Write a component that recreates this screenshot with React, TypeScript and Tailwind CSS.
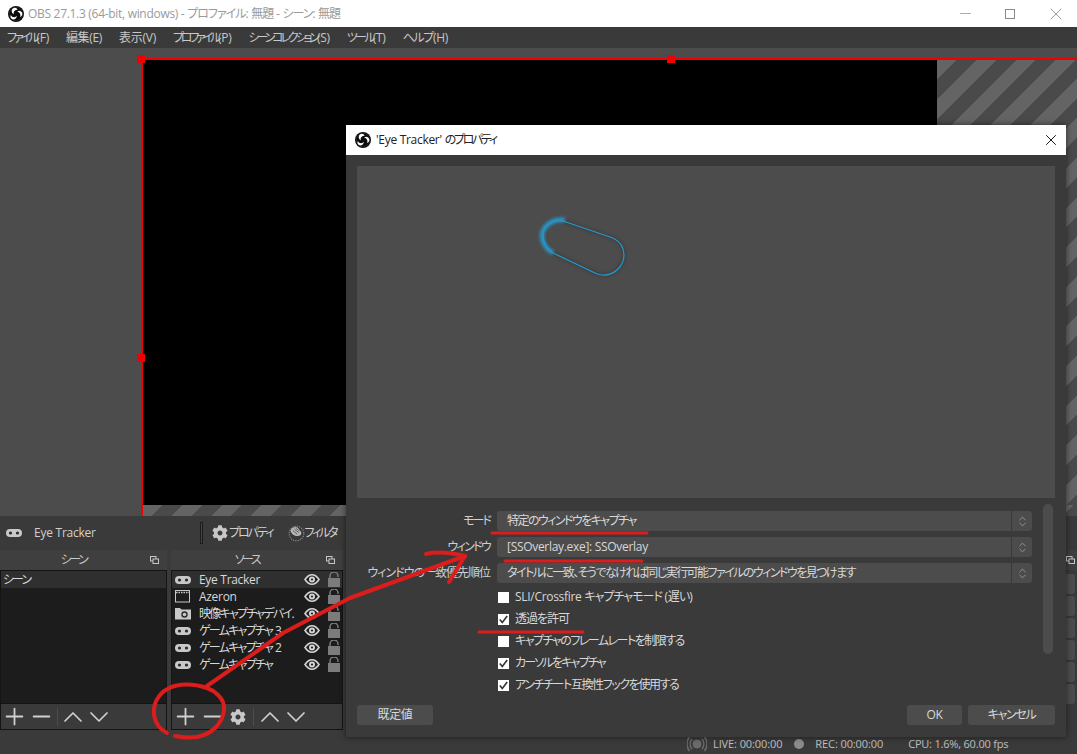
import { ChevronDown, ChevronUp, ChevronsUpDown, Minus, Plus, X } from "lucide-react";
import { FaCog } from "react-icons/fa";

const menus = [
  { label: "ファイル(F)", track: "tracking-[-3px]" },
  { label: "編集(E)", track: "tracking-[-0.4px]" },
  { label: "表示(V)", track: "tracking-[-0.2px]" },
  { label: "プロファイル(P)", track: "tracking-[-3.2px]" },
  { label: "シーンコレクション(S)", track: "tracking-[-3.1px]" },
  { label: "ツール(T)", track: "tracking-[-2.7px]" },
  { label: "ヘルプ(H)", track: "tracking-[-1.3px]" },
];

const sources = [
  { name: "Eye Tracker", icon: "game", active: true },
  { name: "Azeron", icon: "window" },
  { name: "映像キャプチャデバイ.", icon: "camera" },
  { name: "ゲームキャプチャ 3", icon: "game" },
  { name: "ゲームキャプチャ 2", icon: "game" },
  { name: "ゲームキャプチャ", icon: "game" },
];

const checks = [
  { label: "SLI/Crossfire キャプチャモード (遅い)", on: false, track: "tracking-[-1px]" },
  { label: "透過を許可", on: true, track: "tracking-[-1px]" },
  { label: "キャプチャのフレームレートを制限する", on: false, track: "tracking-[-1.5px]" },
  { label: "カーソルをキャプチャ", on: true, track: "tracking-[-1.8px]" },
  { label: "アンチチート互換性フックを使用する", on: true, track: "tracking-[-1.4px]" },
];

// 英数字と日本語で字間を分ける
const Jp = ({ text, track = "tracking-[-1px]" }: { text: string; track?: string }) => (
  <>
    {text.match(/[\x00-\x7f]+|[^\x00-\x7f]+/g)?.map((run, i) => (
      <span key={i} className={/^[\x00-\x7f]/.test(run) ? "tracking-[-0.3px]" : track}>
        {run}
      </span>
    ))}
  </>
);

const ObsLogo = ({ size = 16 }: { size?: number }) => (
  <svg width={size} height={size} viewBox="0 0 32 32" className="shrink-0">
    <circle cx="16" cy="16" r="16" fill="#0b0b0b" />
    <circle cx="16" cy="16" r="13.5" fill="none" stroke="#fff" strokeWidth="0.8" opacity="0.25" />
    <path d="M10 4.5a7 7 0 0 1 9.5 3 7.5 7.5 0 0 0-7.5 3.5 7 7 0 0 0-.3 5.5A7 7 0 0 1 10 4.5z" fill="#fff" />
    <path d="M28 13a7 7 0 0 1-4 9 7.5 7.5 0 0 0-.8-8.2 7 7 0 0 0-5-2.4A7 7 0 0 1 28 13z" fill="#fff" />
    <path d="M10 27a7 7 0 0 1-4.5-9 7.5 7.5 0 0 0 7 4.6 7 7 0 0 0 5-3A7 7 0 0 1 10 27z" fill="#fff" />
  </svg>
);

const GameIcon = () => (
  <svg width="16" height="8" viewBox="0 0 16 8" className="shrink-0">
    <rect width="16" height="8" rx="4" fill="#c8c8c8" />
    <circle cx="4.5" cy="4" r="1.6" fill="#2a2a2a" />
    <circle cx="11.5" cy="4" r="1.6" fill="#2a2a2a" />
  </svg>
);

const WindowIcon = () => (
  <svg width="16" height="13" viewBox="0 0 16 13" className="shrink-0">
    <rect x="0.5" y="0.5" width="14" height="11.5" fill="none" stroke="#c8c8c8" />
    <path d="M1 2.5h13" stroke="#c8c8c8" strokeWidth="1.5" strokeDasharray="1.5 1" />
  </svg>
);

const CameraIcon = () => (
  <svg width="16" height="13" viewBox="0 0 16 13" className="shrink-0">
    <path d="M0 1h5l1.5 1.5H16V12.5H0z" fill="#c8c8c8" />
    <circle cx="9.5" cy="7.5" r="3.2" fill="#2a2a2a" />
    <circle cx="9.5" cy="7.5" r="1.8" fill="#c8c8c8" />
  </svg>
);

const EyeIcon = () => (
  <svg width="16" height="11" viewBox="0 0 16 11" className="shrink-0">
    <path d="M0 5.5C2.5 1.5 5 0 8 0s5.5 1.5 8 5.5C13.5 9.5 11 11 8 11S2.5 9.5 0 5.5z" fill="#d4d4d4" />
    <path d="M2 5.5C4 2.7 6 1.5 8 1.5s4 1.2 6 4c-2 2.8-4 4-6 4s-4-1.2-6-4z" fill="#222" />
    <circle cx="8" cy="5.5" r="3" fill="#d4d4d4" />
    <circle cx="8" cy="5.5" r="1.1" fill="#222" />
  </svg>
);

const LockIcon = () => (
  <svg width="12" height="15" viewBox="0 0 12 15" className="shrink-0">
    <path d="M2 6V4a4 4 0 0 1 8 0v1" fill="none" stroke="#7c7c7c" strokeWidth="1.5" />
    <rect y="6" width="12" height="9" fill="#7c7c7c" />
  </svg>
);

const DockFloat = () => (
  <svg width="9" height="8" viewBox="0 0 9 8" className="shrink-0">
    <rect x="0.5" y="0.5" width="5.5" height="4.5" fill="none" stroke="#c8c8c8" />
    <rect x="3" y="3" width="5.5" height="4.5" fill="#3f3f3f" stroke="#c8c8c8" />
  </svg>
);

const FilterIcon = () => (
  <svg width="17" height="17" viewBox="0 0 22 22" className="shrink-0">
    <circle cx="11" cy="11" r="9.5" fill="none" stroke="#9a9a9a" strokeWidth="1.3" strokeDasharray="1.5 1.5" />
    <path d="M3 7c2-4 7-6 10-3l4 5c1 3-1 5-3 5-4 1-9-1-11-7z" fill="#b8b8b8" />
    <path d="M6 7l6 5M8 5l6 5M10 4l5 4" stroke="#3a3a3a" strokeWidth="0.9" />
  </svg>
);

const BroadcastIcon = () => (
  <svg width="20" height="16" viewBox="0 0 20 16" className="shrink-0" fill="none" stroke="#6b6b6b">
    <circle cx="10" cy="8" r="4" fill="#6b6b6b" />
    <path d="M5 3a8 8 0 0 0 0 10M15 3a8 8 0 0 1 0 10" strokeWidth="1.5" />
    <path d="M2.5 1a11 11 0 0 0 0 14M17.5 1a11 11 0 0 1 0 14" strokeWidth="1.5" />
  </svg>
);

const ToolbarIcons = ({ gear }: { gear?: boolean }) => (
  <div className="flex h-[27px] items-center overflow-hidden border border-[#141414] bg-[#3a3a3a] text-[#d0d0d0]">
    <Plus size={27} strokeWidth={1.6} className="shrink-0" />
    <Minus size={27} strokeWidth={1.6} className="shrink-0" />
    {gear && <FaCog size={16} className="ml-[4px] shrink-0 text-[#c8c8c8]" />}
    <div className={`h-[18px] w-px shrink-0 bg-[#4c4c4c] ${gear ? "ml-[7px]" : "ml-[2px]"}`} />
    <ChevronUp size={32} strokeWidth={1.3} className={gear ? "shrink-0" : "-ml-[1px] shrink-0"} />
    <ChevronDown size={32} strokeWidth={1.3} className="-ml-[6px] shrink-0" />
  </div>
);

const SourceIcon = ({ type }: { type: string }) => {
  if (type === "window") return <WindowIcon />;
  if (type === "camera") return <CameraIcon />;
  return <GameIcon />;
};

const DockTitle = ({ title }: { title: string }) => (
  <div className="relative flex h-[20px] shrink-0 items-center justify-center bg-[#3f3f3f] pr-[20px] text-[12px] text-[#c8c8c8]">
    <Jp text={title} track="tracking-[-2.5px]" />
    <span className="absolute right-[8px] top-[6px]">
      <DockFloat />
    </span>
  </div>
);

const SelectRow = ({ label, value, labelTrack }: { label: string; value: string; labelTrack: string }) => (
  <div className="flex h-[20px] items-center">
    <div className="w-[146px] shrink-0 whitespace-nowrap pr-[7px] text-right text-[12px] text-[#d0d0d0]">
      <Jp text={label} track={labelTrack} />
    </div>
    <div className="flex h-full w-[535px] items-center rounded-[3px] bg-[#4c4c4c]">
      <span className="flex-1 whitespace-nowrap pl-[10px] text-[12px] text-[#d8d8d8]">
        <Jp text={value} track="tracking-[-1.55px]" />
      </span>
      <span className="flex h-full w-[21px] items-center justify-center border-l border-[#3a3a3a] text-[#b8b8b8]">
        <ChevronsUpDown size={13} strokeWidth={1.2} />
      </span>
    </div>
  </div>
);

const CheckRow = ({ label, on, track }: { label: string; on: boolean; track: string }) => (
  <div className="flex h-[22px] items-center pl-[152px]">
    <span className="flex h-[11px] w-[11px] items-center justify-center bg-white">
      {on && (
        <svg width="11" height="11" viewBox="0 0 11 11">
          <path d="M1.8 5.5l2.5 3L9.2 2" fill="none" stroke="#333" strokeWidth="1.6" />
        </svg>
      )}
    </span>
    <span className="ml-[6px] whitespace-nowrap text-[12px] text-[#d8d8d8]">
      <Jp text={label} track={track} />
    </span>
  </div>
);

const DialogButton = ({ label, className, track }: { label: string; className: string; track?: string }) => (
  <div className={`flex h-[20px] items-center justify-center rounded-[3px] bg-[#4c4c4c] text-[12px] text-[#d8d8d8] ${className}`}>
    <Jp text={label} track={track} />
  </div>
);

const stripes = "bg-[repeating-linear-gradient(135deg,#646464_0,#646464_14px,#4a4a4a_14px,#4a4a4a_28px)]";

export default function App() {
  return (
    <div className="relative flex h-[754px] w-[1077px] flex-col overflow-hidden bg-[#3a3a3a] font-['Open_Sans','Noto_Sans_CJK_JP',sans-serif] [font-feature-settings:'palt']">
      {/* タイトルバー */}
      <div className="flex h-[27px] shrink-0 items-center bg-white pl-[8px] text-[12px] text-[#9a9a9a]">
        <ObsLogo />
        <span className="ml-[4px] flex-1">
          <Jp text="OBS 27.1.3 (64-bit, windows) - プロファイル: 無題 - シーン: 無題" />
        </span>
        <Minus size={17} strokeWidth={1} className="mr-[31px] text-[#888]" />
        <span className="mr-[31px] h-[10px] w-[10px] border border-[#888]" />
        <X size={20} strokeWidth={1} className="mr-[11px] text-[#888]" />
      </div>

      {/* メニュー */}
      <div className="flex h-[21px] shrink-0 items-center gap-[17px] pl-[7px] text-[12px] text-[#c8c8c8]">
        {menus.map((m) => (
          <span key={m.label}>
            <Jp text={m.label} track={m.track} />
          </span>
        ))}
      </div>

      {/* プレビュー */}
      <div className="flex h-[468px] shrink-0 flex-col bg-[#4c4c4c] pl-[141px] pt-[10px]">
        <div className="relative flex min-h-0 flex-1 flex-col border-l-2 border-t-2 border-[#f00000]">
          <span className="absolute left-[-6px] top-[-5px] h-[8px] w-[8px] bg-[#f00000]" />
          <span className="absolute left-[524px] top-[-5px] h-[8px] w-[8px] bg-[#f00000]" />
          <span className="absolute left-[-6px] top-[294px] h-[8px] w-[8px] bg-[#f00000]" />
          <div className="flex min-h-0 flex-1">
            <div className="flex-1 bg-black" />
            <div className={`w-[140px] ${stripes}`} />
          </div>
          <div className={`h-[11px] shrink-0 ${stripes}`} />
        </div>
      </div>

      {/* コンテキストバー */}
      <div className="flex h-[34px] shrink-0 items-center pl-[6px] text-[12px] text-[#d0d0d0]">
        <GameIcon />
        <span className="ml-[12px] w-[166px] tracking-[-0.25px]">Eye Tracker</span>
        <span className="h-[22px] w-[3px] border border-[#1c1c1c] bg-[#444]" />
        <FaCog size={16} className="ml-[9px] text-[#c8c8c8]" />
        <span className="ml-[1px]">
          <Jp text="プロパティ" track="tracking-[-2px]" />
        </span>
        <span className="ml-[15px]">
          <FilterIcon />
        </span>
        <Jp text="フィルタ" track="tracking-[-2.25px]" />
      </div>

      {/* ドック */}
      <div className="flex h-[180px] shrink-0 items-start gap-[4px]">
        <div className="flex h-full w-[167px] flex-col">
          <DockTitle title="シーン" />
          <div className="flex h-[133px] flex-col border-x border-t border-[#141414] bg-[#1c1c1c]">
            <div className="flex h-[17px] items-center bg-[#2f2f2f] pl-[2px] text-[12px] text-[#d8d8d8]">
              <Jp text="シーン" track="tracking-[-2px]" />
            </div>
          </div>
          <ToolbarIcons />
        </div>
        <div className="flex h-full w-[172px] flex-col">
          <DockTitle title="ソース" />
          <div className="flex h-[133px] flex-col border-x border-t border-[#141414] bg-[#1c1c1c]">
            {sources.map((s) => (
              <div key={s.name} className={`flex h-[17px] shrink-0 items-center pl-[3px] pr-[2px] text-[12px] text-[#d8d8d8] ${s.active ? "bg-[#2f2f2f]" : ""}`}>
                <span className="flex w-[16px] shrink-0 justify-center">
                  <SourceIcon type={s.icon} />
                </span>
                <span className="ml-[8px] whitespace-pre">
                  <Jp text={s.name} track="tracking-[-1.75px]" />
                </span>
                <span className="ml-auto mr-[8px]">
                  <EyeIcon />
                </span>
                <LockIcon />
              </div>
            ))}
          </div>
          <ToolbarIcons gear />
        </div>
        <div className="flex h-full flex-1 flex-col items-end">
          <div className="flex h-[20px] w-[70px] shrink-0 items-start justify-end bg-[#3f3f3f] pr-[2px] pt-[6px]">
            <DockFloat />
          </div>
          <div className="mt-[4px] flex flex-col gap-[2px] pr-[2px]">
            {[0, 1, 2, 3, 4, 5].map((i) => (
              <div key={i} className="h-[20px] w-[70px] rounded-[3px] bg-[#4c4c4c]" />
            ))}
          </div>
        </div>
      </div>

      {/* ステータスバー */}
      <div className="flex flex-1 items-end pb-[2px] pl-[687px] text-[11px] text-[#c0c0c0]">
        <BroadcastIcon />
        <span className="ml-[6px] tracking-[-0.1px]">LIVE: 00:00:00</span>
        <span className="mb-[3px] ml-[12px] h-[10px] w-[10px] rounded-full bg-[#8c8c8c]" />
        <span className="ml-[11px] tracking-[-0.1px]">REC: 00:00:00</span>
        <span className="ml-[25px] tracking-[-0.2px]">CPU: 1.6%, 60.00 fps</span>
      </div>

      {/* プロパティダイアログ */}
      <div className="absolute left-[346px] top-[125px] flex h-[612px] w-[720px] flex-col bg-[#3a3a3a] shadow-[0_0_6px_rgba(0,0,0,0.55)]">
        <div className="flex h-[30px] shrink-0 items-center bg-white pl-[9px] text-[12px] text-[#222]">
          <ObsLogo />
          <span className="ml-[5px] flex-1 whitespace-pre">
            <Jp text="'Eye Tracker' のプロパティ" track="tracking-[-2.3px]" />
          </span>
          <X size={18} strokeWidth={1.2} className="mr-[6px] text-black" />
        </div>
        <div className="mx-[11px] mt-[11px] flex h-[332px] shrink-0 bg-[#4c4c4c]">
          <svg width="698" height="332" viewBox="0 0 698 332">
            <defs>
              <filter id="glow" x="-30%" y="-30%" width="160%" height="160%">
                <feGaussianBlur stdDeviation="1.8" />
              </filter>
            </defs>
            <path d="M206 55L256 72C264 76 267 83 267 89C267 100 257 110 245 109C242 109 240 108 238 107L196 87C190 83 186 76 186 69C186 60 195 53 206 55Z" fill="none" stroke="#2a2a2a" strokeWidth="4" opacity="0.35" filter="url(#glow)" />
            <path d="M208 54C196 52 186 60 185 69C185 76 189 83 196 87" fill="none" stroke="#2aa4dc" strokeWidth="5" opacity="0.8" filter="url(#glow)" />
            <path d="M206 55L256 72C264 76 267 83 267 89C267 100 257 110 245 109C242 109 240 108 238 107L196 87C190 83 186 76 186 69C186 60 195 53 206 55Z" fill="none" stroke="#2399cf" strokeWidth="1.2" />
          </svg>
        </div>
        <div className="relative flex flex-1 flex-col">
          <div className="mt-[13px] flex flex-col gap-[6px] pl-[5px]">
            <SelectRow label="モード" value="特定のウィンドウをキャプチャ" labelTrack="tracking-[-2px]" />
            <SelectRow label="ウィンドウ" value="[SSOverlay.exe]: SSOverlay" labelTrack="tracking-[-1.7px]" />
            <SelectRow label="ウィンドウの一致優先順位" value="タイトルに一致、そうでなければ同じ実行可能ファイルのウィンドウを見つけます" labelTrack="tracking-[-1px]" />
          </div>
          <div className="mt-[3px] flex flex-col">
            {checks.map((c) => (
              <CheckRow key={c.label} label={c.label} on={c.on} track={c.track} />
            ))}
          </div>
          <span className="absolute right-[13px] top-[6px] h-[150px] w-[10px] rounded-full bg-[#4c4c4c]" />
          <div className="mt-[9px] flex items-center px-[11px]">
            <DialogButton label="既定値" className="w-[76px]" track="tracking-[-0.3px]" />
            <span className="flex-1" />
            <DialogButton label="OK" className="mr-[6px] w-[55px]" />
            <DialogButton label="キャンセル" className="w-[87px]" track="tracking-[-1.3px]" />
          </div>
        </div>
      </div>

      {/* 赤い手書きの注釈 */}
      <svg className="pointer-events-none absolute left-0 top-0" width="1077" height="754" viewBox="0 0 1077 754" fill="none" stroke="#dd1c1c" strokeLinecap="round" strokeLinejoin="round">
        <path d="M207 688C190 682 170 683 160 695C150 707 152 725 167 733" strokeWidth="4" />
        <path d="M175 736C190 739 205 738 215 728C226 717 227 703 218 695C214 691 210 689 207 688" strokeWidth="4" />
        <path d="M207 686L283 633L350 598L465 556" strokeWidth="4" />
        <path d="M426 554C438 551 452 553 465 556L449 582" strokeWidth="4" />
        <path d="M492 533H647" strokeWidth="3" />
        <path d="M505 561H642" strokeWidth="3" />
        <path d="M479 632H583" strokeWidth="3" />
      </svg>
    </div>
  );
}
